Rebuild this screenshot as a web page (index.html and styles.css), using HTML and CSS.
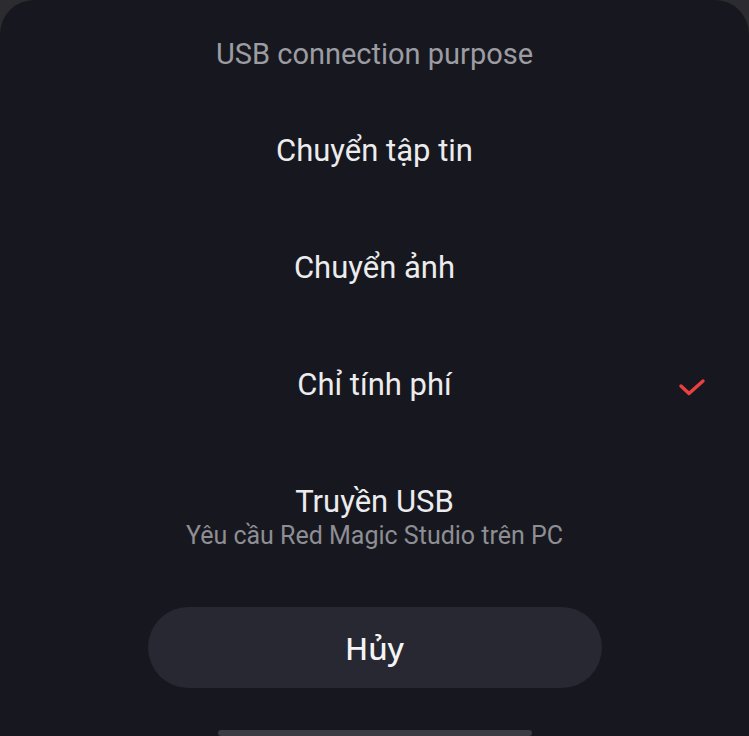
FILE: index.html
```html
<!DOCTYPE html>
<html lang="vi">
<head>
    <meta charset="UTF-8">
    <meta name="viewport" content="width=device-width, initial-scale=1.0">
    <title>USB connection purpose</title>
    <link rel="stylesheet" href="styles.css">
</head>
<body>
    <div class="sheet">
        <h1 class="title">USB connection purpose</h1>

        <ul class="options">
            <li class="option"><span></span><span class="label">Chuyển tập tin</span><span></span></li>
            <li class="option"><span></span><span class="label">Chuyển ảnh</span><span></span></li>
            <li class="option selected">
                <span></span>
                <span class="label">Chỉ tính phí</span>
                <span class="check">
                    <svg width="28" height="20" viewBox="0 0 28 20">
                        <path d="M3 9 L11 16.5 L25 4" fill="none" stroke="#ec4040" stroke-width="3.4" stroke-linecap="round" stroke-linejoin="round"/>
                    </svg>
                </span>
            </li>
            <li class="option two-line">
                <span></span>
                <span class="label">Truyền USB<span class="sub">Yêu cầu Red Magic Studio trên PC</span></span>
                <span></span>
            </li>
        </ul>

        <button class="cancel">Hủy</button>

        <div class="home-bar"></div>
    </div>
</body>
</html>
```

FILE: styles.css
```css
* {
    margin: 0;
    padding: 0;
    box-sizing: border-box;
}
html, body {
    height: 100%;
}
body {
    background: #2c2c30;
    font-family: 'Roboto', 'Noto Sans', sans-serif;
    overflow: hidden;
}

.sheet {
    background: #17181f;
    border-radius: 34px 34px 0 0;
    height: 100%;
    padding-top: 34px;
    display: flex;
    flex-direction: column;
    align-items: center;
}
.title {
    font-size: 29px;
    font-weight: 400;
    line-height: 40px;
    color: #9c9ca2;
}

.options {
    list-style: none;
    width: 100%;
    margin-top: 19px;
}
.option {
    display: grid;
    grid-template-columns: 1fr auto 1fr;
    align-items: start;
    height: 117px;
    padding-top: 41px;
}
.label {
    font-size: 31px;
    line-height: 34px;
    color: #ececee;
    text-align: center;
}
.check {
    justify-self: end;
    padding-right: 43px;
    padding-top: 9px;
    line-height: 0;
}
.two-line {
    height: auto;
}
.sub {
    display: block;
    font-size: 25px;
    line-height: 33px;
    color: #8e8e94;
}

.cancel {
    margin-top: 55px;
    width: 454px;
    height: 84px;
    border: none;
    border-radius: 42px;
    background: #272832;
    color: #f4f4f6;
    font-family: 'Noto Sans', 'Roboto', sans-serif;
    font-size: 31px;
    font-weight: 500;
}

.home-bar {
    margin-top: 42px;
    width: 314px;
    height: 6px;
    border-radius: 3px;
    background: #3a3b43;
}
```
